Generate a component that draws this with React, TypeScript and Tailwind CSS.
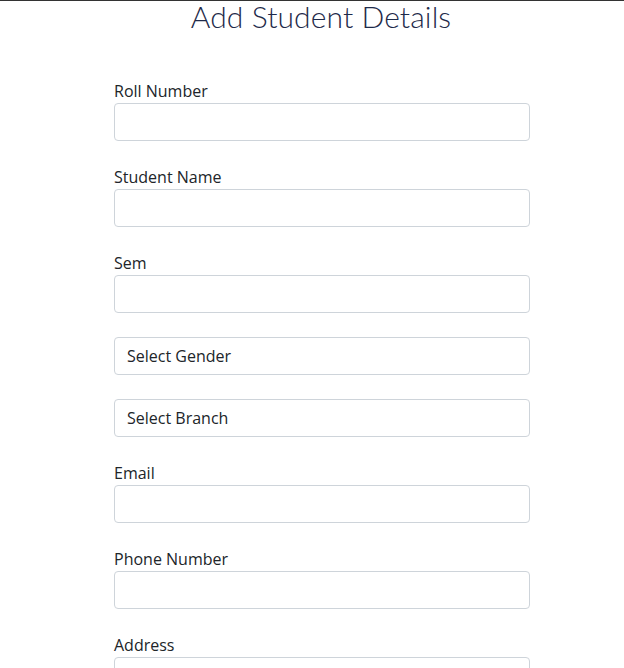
import React from "react";

const Field = ({ label }: { label: string }) => (
  <div className="mb-6">
    <label className="block text-[16px] leading-6 text-[#212529]">{label}</label>
    <input className="block w-full h-[38px] border border-[#ced4da] rounded bg-white px-3 outline-none" />
  </div>
);

const SelectBox = ({ text }: { text: string }) => (
  <div className="mb-6">
    <div className="w-full h-[38px] border border-[#ced4da] rounded bg-white px-3 flex items-center text-[16px] text-[#212529]">
      {text}
    </div>
  </div>
);

export default function App() {
  return (
    <div className="min-h-[668px] bg-white border-t border-[#333]" style={{ fontFamily: '"Open Sans", sans-serif' }}>
      <h1
        className="text-center text-[30px] leading-[36px] -mt-[3px] font-light text-[#1e2a4a] pl-[18px] tracking-[0.1px]"
        style={{ fontFamily: 'Lato, "Open Sans", sans-serif' }}
      >
        Add Student Details
      </h1>
      <div className="ml-[114px] w-[416px] mt-[45px]">
        <Field label="Roll Number" />
        <Field label="Student Name" />
        <Field label="Sem" />
        <SelectBox text="Select Gender" />
        <SelectBox text="Select Branch" />
        <Field label="Email" />
        <Field label="Phone Number" />
        <Field label="Address" />
      </div>
    </div>
  );
}
